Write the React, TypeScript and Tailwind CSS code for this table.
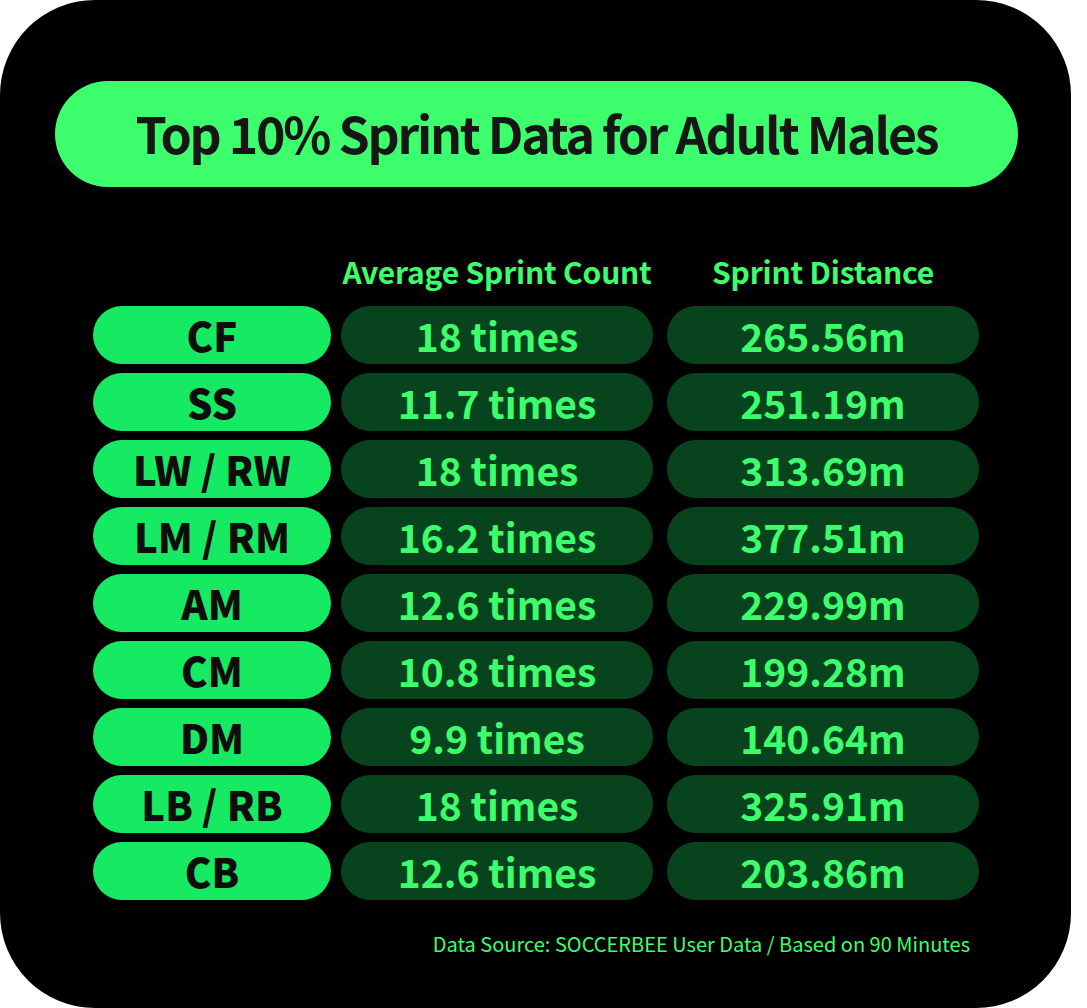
import React from "react";

const rows = [
  ["CF", "18 times", "265.56m"],
  ["SS", "11.7 times", "251.19m"],
  ["LW / RW", "18 times", "313.69m"],
  ["LM / RM", "16.2 times", "377.51m"],
  ["AM", "12.6 times", "229.99m"],
  ["CM", "10.8 times", "199.28m"],
  ["DM", "9.9 times", "140.64m"],
  ["LB / RB", "18 times", "325.91m"],
  ["CB", "12.6 times", "203.86m"],
];

const font = { fontFamily: '"Noto Sans CJK KR", "Noto Sans", sans-serif' };

export default function App() {
  return (
    <div className="w-[1087px] h-[1008px] bg-white" style={font}>
      <div className="w-[1071px] h-[1008px] bg-black rounded-[95px] flex flex-col">
        <div className="ml-[55px] mt-[81px] w-[963px] h-[106px] rounded-full bg-[#3dff6e] flex items-center justify-center">
          <span className="text-[50px] font-bold text-[#161616] leading-none tracking-[-2.2px] -mt-[4px]">
            Top 10% Sprint Data for Adult Males
          </span>
        </div>

        <div className="ml-[93px] mt-[67px] flex h-[34px]">
          <div className="w-[238px]" />
          <div className="ml-[10px] w-[312px] flex justify-center text-[30px] leading-[34px] font-bold tracking-[-0.2px] whitespace-nowrap text-[#3dff6e]">
            Average Sprint Count
          </div>
          <div className="ml-[14px] w-[312px] flex justify-center text-[30px] leading-[34px] font-bold tracking-[-0.2px] whitespace-nowrap text-[#3dff6e]">
            Sprint Distance
          </div>
        </div>

        <div className="ml-[93px] mt-[18px] flex flex-col gap-[9px]">
          {rows.map(([pos, count, dist]) => (
            <div key={pos} className="flex h-[58px]">
              <div className="w-[238px] rounded-full bg-[#16ea63] flex items-center justify-center text-[40px] font-black text-[#0d0d0d] leading-none">
                {pos}
              </div>
              <div className="ml-[10px] w-[312px] rounded-full bg-[#07441d] flex items-center justify-center text-[39px] font-bold text-[#3dff6e] leading-none">
                {count}
              </div>
              <div className="ml-[14px] w-[312px] rounded-full bg-[#07441d] flex items-center justify-center text-[39px] font-bold text-[#3dff6e] leading-none">
                {dist}
              </div>
            </div>
          ))}
        </div>

        <div className="mt-[30px] w-[970px] text-right text-[20px] leading-[28px] text-[#3dff6e]">
          Data Source: SOCCERBEE User Data / Based on 90 Minutes
        </div>
      </div>
    </div>
  );
}
